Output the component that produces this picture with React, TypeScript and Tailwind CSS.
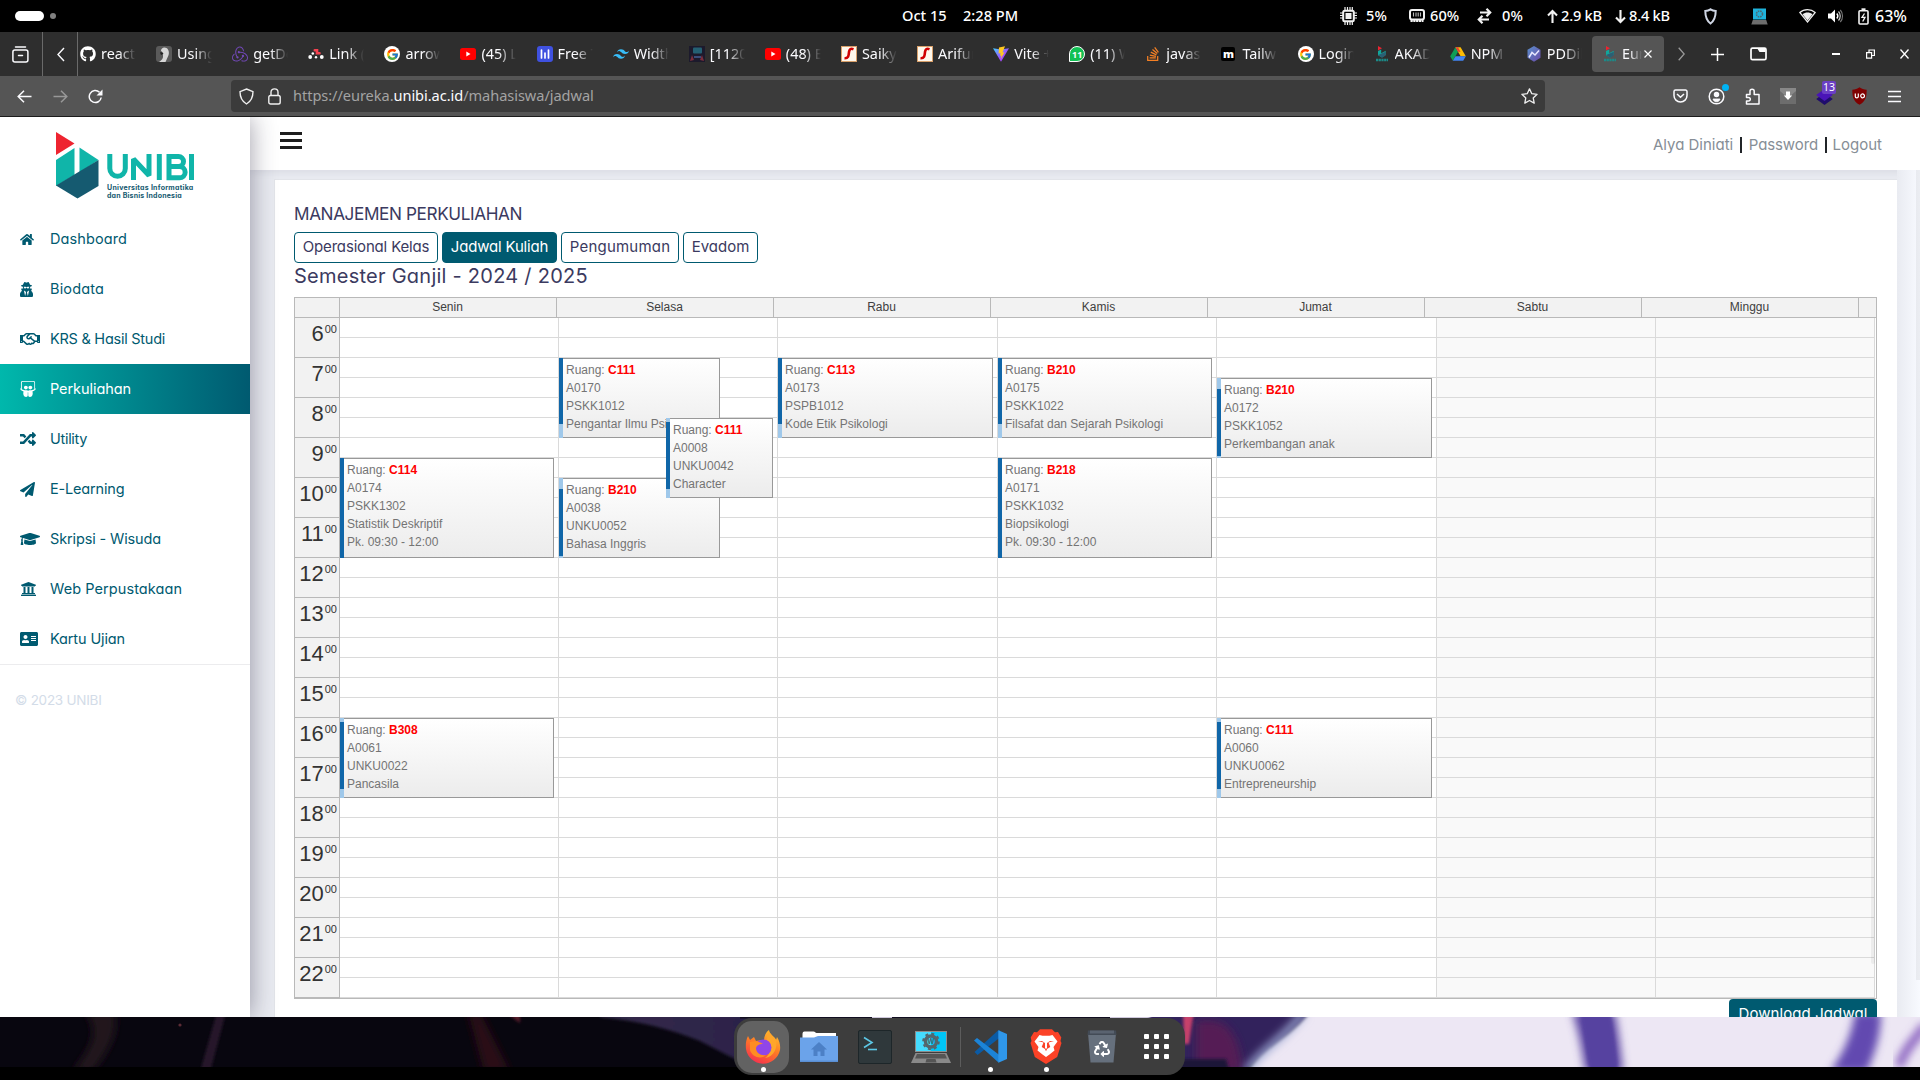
import type { ReactNode } from "react";
import { FaGithub, FaHome, FaUserSecret, FaRegHandshake, FaSlideshare, FaRandom, FaPaperPlane, FaGraduationCap, FaUniversity, FaAddressCard, FaStackOverflow, FaRecycle } from "react-icons/fa";
import { FcGoogle } from "react-icons/fc";
import { SiRedux, SiTailwindcss } from "react-icons/si";

/* ---------- Desktop top bar ---------- */

function TopBar() {
  return (
    <div className="relative flex h-8 items-center bg-black font-['Noto_Sans'] text-[14.6px] font-medium text-white">
      <div className="ml-[15px] h-[10px] w-[29px] rounded-full bg-white" />
      <div className="ml-[6px] size-[6px] rounded-full bg-[#808080]" />
      <div className="ml-[846px] flex whitespace-nowrap">
        <span className="w-[61px]">Oct 15</span>
        <span>2:28 PM</span>
      </div>
      <div className="ml-auto mr-[13px] flex items-center whitespace-nowrap">
        <svg width="17" height="18" viewBox="0 0 17 18" fill="none" stroke="#f2f2f2" className="mr-[9px]">
          <rect x="3.2" y="3.7" width="10.6" height="10.6" rx="1.5" strokeWidth="2" />
          <rect x="6" y="6.5" width="5" height="5" fill="#f2f2f2" />
          <path d="M5 0v3M7.5 0v3M10 0v3M12.3 0v3M5 15v3M7.5 15v3M10 15v3M12.3 15v3M0 6h3M0 8.5h3M0 11h3M14 6h3M14 8.5h3M14 11h3" strokeWidth="1.2" />
        </svg>
        <span className="w-[43px]">5%</span>
        <svg width="16" height="14" viewBox="0 0 16 14" className="mr-[5px]">
          <rect x="1" y="1" width="14" height="9.5" rx="2" fill="none" stroke="#f2f2f2" strokeWidth="2" />
          <path d="M4.500 3.500v4M7 3.500v4M9.200 3.500v4M11.500 3.500v4" stroke="#bbb" strokeWidth="1.1" />
          <path d="M1.500 12h13" stroke="#f2f2f2" strokeWidth="2.2" strokeDasharray="2.2 .6" />
        </svg>
        <span className="w-[47px]">60%</span>
        <svg width="15" height="16" viewBox="0 0 15 16" fill="none" stroke="#f2f2f2" strokeWidth="2.200" className="mr-[10px]">
          <path d="M3 4.500h9.500M9.500 .8l3.700 3.700-3.700 3.700M12 11.500H2.500M5.500 7.800L1.800 11.500l3.700 3.700" />
        </svg>
        <span className="w-[45px]">0%</span>
        <svg width="11" height="15" viewBox="0 0 11 15" fill="none" stroke="#f2f2f2" strokeWidth="2.1" className="mr-[3px]">
          <path d="M5.500 14V2M1 6.500L5.500 2 10 6.500" />
        </svg>
        <span className="w-[54px] tracking-[-0.25px]">2.9 kB</span>
        <svg width="11" height="15" viewBox="0 0 11 15" fill="none" stroke="#f2f2f2" strokeWidth="2.1" className="mr-[3px]">
          <path d="M5.500 1v12M1 8.500L5.500 13 10 8.500" />
        </svg>
        <span className="w-[75px] tracking-[-0.25px]">8.4 kB</span>
        <svg width="13" height="17" viewBox="0 0 13 17" fill="none" stroke="#cfd6e4" strokeWidth="2" className="mr-[34px]">
          <path d="M6.500 1.300c1.600 1 3.200 1.500 5.200 1.700 0 5.400-.700 9.200-5.200 12.500C2 12.200 1.300 8.400 1.300 3c2-.200 3.600-.700 5.200-1.700z" />
        </svg>
        <svg width="17" height="17" viewBox="0 0 17 17" className="mr-[31px]">
          <rect x="2" y="0.500" width="13" height="11" fill="#1fb3dc" />
          <circle cx="8.500" cy="6" r="3" fill="none" stroke="#4b6a76" strokeWidth="1.600" strokeDasharray="1.600 .8" />
          <path d="M1.800 12h13.400l1.500 4.500H.3z" fill="#6d6d6d" />
        </svg>
        <svg width="17" height="14" viewBox="0 0 17 14" className="mr-[12px]">
          <path d="M.8 3.500C5-.3 12-.3 16.200 3.500L8.500 13z" fill="none" stroke="#eee" strokeWidth="1.200" />
          <path d="M3.500 5.200c3-2.200 7-2.200 10 0l-5 6.300z" fill="#eee" />
        </svg>
        <svg width="16" height="14" viewBox="0 0 16 14" fill="none" className="mr-[14px]">
          <path d="M0 4.500h3L7 .5v13l-4-4H0z" fill="#fff" />
          <path d="M8.800 4.500c1.200 1.400 1.200 3.600 0 5" stroke="#fff" strokeWidth="1.400" />
          <path d="M10.500 2.500c2.300 2.400 2.300 6.600 0 9" stroke="#ccc" strokeWidth="1.200" />
          <path d="M12.300 1c3 3.200 3 8.800 0 12" stroke="#777" strokeWidth="1.100" />
        </svg>
        <svg width="11" height="17" viewBox="0 0 11 17" fill="none" stroke="#f2f2f2" className="mr-[6px]">
          <rect x="1" y="2.800" width="9" height="13.200" rx="1" strokeWidth="1.600" />
          <path d="M3.500 1.200h4" strokeWidth="1.800" />
          <path d="M6.500 5.500L4 9.300h3L4.700 13.500" strokeWidth="1.300" />
        </svg>
        <span className="text-[16px]">63%</span>
      </div>
    </div>
  );
}

/* ---------- Browser chrome ---------- */

const YouTubeIcon = () => (
  <svg width="16" height="12" viewBox="0 0 16 12">
    <rect width="16" height="12" rx="2.500" fill="#f00" />
    <path d="M6.300 3.600v4.800L10.500 6z" fill="#fff" />
  </svg>
);

const ScriptSIcon = () => (
  <svg width="16" height="16" viewBox="0 0 16 16">
    <rect x=".5" y=".5" width="15" height="15" fill="#fff8ec" stroke="#d9a06a" />
    <path d="M12.500 3.200C9.500 2 8.300 3.500 8 6c-.3 3.500-.5 6.500-4.500 6.300" fill="none" stroke="#d00000" strokeWidth="2.600" />
  </svg>
);

const UnibiIcon = () => (
  <svg width="16" height="16" viewBox="0 0 16 16">
    <path d="M4 0l4 2.200-4 2.200z" fill="#ed2330" />
    <path d="M4 5l3.200-1.500v3.700l4.500-2.500v4L8 11.500 4 9.300z" fill="#11a79c" />
    <path d="M4.200 9l7.500-3.200v3.700L8 11.700z" fill="#2b5f74" />
    <path d="M2 14h12" stroke="#1c8a88" strokeWidth="2.400" strokeDasharray="2.200 .5" />
  </svg>
);

function GoogleIcon() {
  return (
    <span className="flex size-4 items-center justify-center rounded-full bg-white">
      <FcGoogle className="size-[13px]" />
    </span>
  );
}

const tabs: { label: string; icon: ReactNode }[] = [
  { label: "react-icons", icon: <FaGithub className="size-4 text-white" /> },
  {
    label: "Using the",
    icon: (
      <svg width="16" height="16" viewBox="0 0 16 16">
        <rect width="16" height="16" rx="3" fill="#5a5a5a" />
        <path d="M5 5c0-3 3-4.500 5.500-3 3 2 3 6.500 1 9.500L9.500 16H3c3-2 4.500-4 4-6.500C6.500 7.500 7 6 5 5z" fill="#d6d6d6" />
        <path d="M4 6.500c2-.8 3.300 0 3.300 1.500L5 9z" fill="#222" />
      </svg>
    ),
  },
  { label: "getDefault", icon: <SiRedux className="size-4 text-[#7248b8]" /> },
  {
    label: "Link (ov",
    icon: (
      <svg width="16" height="12" viewBox="0 0 16 12">
        <g fill="#fff"><circle cx="2.200" cy="9" r="1.900" /><circle cx="8" cy="9.200" r="1.200" /><circle cx="13.800" cy="9" r="1.900" /><circle cx="4.800" cy="5.500" r="1.300" /></g>
        <path d="M6.800 2.300h2.200v3h2.500" fill="none" stroke="#f44250" strokeWidth="2.600" strokeLinecap="round" />
      </svg>
    ),
  },
  { label: "arrow ic", icon: <GoogleIcon /> },
  { label: "(45) Lo", icon: <YouTubeIcon /> },
  {
    label: "Free Ta",
    icon: (
      <svg width="16" height="16" viewBox="0 0 16 16">
        <rect width="16" height="16" rx="3" fill="#3f51e0" />
        <path d="M4.500 4v8M8 7v5M11.500 4v8" stroke="#fff" strokeWidth="1.700" strokeLinecap="round" />
      </svg>
    ),
  },
  { label: "Width -", icon: <SiTailwindcss className="size-4 text-[#38bdf8]" /> },
  {
    label: "[1120]",
    icon: (
      <svg width="16" height="16" viewBox="0 0 16 16">
        <rect width="16" height="16" fill="#1c1a2c" />
        <path d="M1 15l2-6 2 5zM15 15l-2-6-2 5z" fill="#7b2d3c" />
        <rect x="4" y="1.500" width="9" height="6" rx="1" fill="#246073" />
        <path d="M5 10h7v2H5z" fill="#3a4d7a" />
      </svg>
    ),
  },
  { label: "(48) El", icon: <YouTubeIcon /> },
  { label: "Saikyo", icon: <ScriptSIcon /> },
  { label: "Arifure", icon: <ScriptSIcon /> },
  {
    label: "Vite + R",
    icon: (
      <svg width="16" height="16" viewBox="0 0 16 16">
        <defs>
          <linearGradient id="vite" x1="0" y1="0" x2="1" y2="1"><stop offset="0" stopColor="#41d1ff" /><stop offset=".6" stopColor="#a34bfe" /></linearGradient>
        </defs>
        <path d="M0 2.200L8 3.500l8-1.300L8 15.800z" fill="url(#vite)" />
        <path d="M12 .2L6 1.400l-.4 6.100 2-.4-.6 2.700 1.500-.4-.8 3.800 3.800-7-2 .4z" fill="#ffc820" />
      </svg>
    ),
  },
  {
    label: "(11) Wh",
    icon: (
      <span className="relative flex size-4 items-center justify-center rounded-full rounded-bl-[3px] border border-white bg-[#12c154] text-[9px] font-bold leading-none text-white">11</span>
    ),
  },
  { label: "javascr", icon: <FaStackOverflow className="size-4 text-[#f48024]" /> },
  {
    label: "Tailwin",
    icon: (
      <span className="flex size-[14px] items-center justify-center rounded-[2px] bg-black pb-[2px] text-[11px] font-black leading-none text-white">m</span>
    ),
  },
  { label: "Login –", icon: <GoogleIcon /> },
  { label: "AKADE", icon: <UnibiIcon /> },
  {
    label: "NPM G",
    icon: (
      <svg width="16" height="14" viewBox="0 0 16 14">
        <path d="M5.400.3h5.200l5.200 9h-5.200z" fill="#fbbc04" />
        <path d="M5.400.3L8 4.800 2.800 13.800.2 9.300z" fill="#0f9d58" />
        <path d="M5.500 9.300h10.300l-2.600 4.500H2.800z" fill="#4285f4" />
        <path d="M5.400.3h2.600L10.600 5 8 4.800z" fill="#ea4335" />
      </svg>
    ),
  },
  {
    label: "PDDikti",
    icon: (
      <svg width="16" height="16" viewBox="0 0 16 16">
        <defs>
          <linearGradient id="pd" x1="0" y1="0" x2="1" y2="1"><stop offset="0" stopColor="#5a8fcc" /><stop offset="1" stopColor="#6a4aa8" /></linearGradient>
        </defs>
        <path d="M8 0l6.500 3.800v8L8 15.800l-6.500-4v-8z" fill="url(#pd)" />
        <path d="M3 11.500L6 6.500l3 2.500 4-4.500" fill="none" stroke="#e8e8ff" strokeWidth="1.500" />
      </svg>
    ),
  },
];

function Tab({ icon, label }: { icon: ReactNode; label: string }) {
  return (
    <div className="flex w-[76.100px] shrink-0 items-center">
      <span className="flex w-[21px] shrink-0 items-center">{icon}</span>
      <span className="w-[35px] overflow-hidden whitespace-nowrap [mask-image:linear-gradient(to_right,black_50%,transparent)]">{label}</span>
    </div>
  );
}

function TabBar() {
  return (
    <div className="flex h-11 items-stretch bg-[#2e2e2e] font-['Noto_Sans'] text-[14.400px] text-[#fbfbfe]">
      <div className="flex w-[43px] items-center border-r border-[#6a6a6a] pl-[12px]">
        <svg width="17" height="17" viewBox="0 0 17 17" fill="none" stroke="#fbfbfe" strokeWidth="1.500" strokeLinecap="round">
          <path d="M3.500 .9h10" />
          <rect x=".9" y="4" width="15" height="12" rx="2" />
          <path d="M6.500 9.500h4" />
        </svg>
      </div>
      <div className="flex w-[35px] items-center border-r border-[#6a6a6a] pl-[14px]">
        <svg width="8" height="15" viewBox="0 0 8 15" fill="none" stroke="#fbfbfe" strokeWidth="1.400"><path d="M7 1L1 7.500 7 14" /></svg>
      </div>
      <div className="ml-[2px] flex">
        {tabs.map((t, i) => (
          <Tab key={i} icon={t.icon} label={t.label} />
        ))}
      </div>
      <div className="-ml-[10px] my-1 flex w-[72px] shrink-0 items-center rounded bg-[#555] pl-[10px]">
        <span className="w-5 shrink-0"><UnibiIcon /></span>
        <span className="w-[20px] overflow-hidden whitespace-nowrap [mask-image:linear-gradient(to_right,black_40%,transparent)]">Eureka</span>
        <svg width="8" height="8" viewBox="0 0 8 8" stroke="#fff" strokeWidth="1.200" className="ml-[2px]"><path d="M.5.500l7 7M7.500.500l-7 7" /></svg>
      </div>
      <div className="flex flex-1 items-center">
        <svg width="7" height="14" viewBox="0 0 7 14" fill="none" stroke="#999" strokeWidth="1.300" className="ml-[14px]"><path d="M.7.700L6.200 7 .7 13.300" /></svg>
        <svg width="13" height="13" viewBox="0 0 13 13" stroke="#fff" strokeWidth="1.500" className="ml-[26px]"><path d="M6.500 0v13M0 6.500h13" /></svg>
        <svg width="17" height="14" viewBox="0 0 17 14" className="ml-[26px]">
          <rect x="1" y="1.200" width="15" height="11.500" rx="1.500" fill="none" stroke="#fff" strokeWidth="1.700" />
          <path d="M7 1h8.500v4H9.500z" fill="#fff" />
        </svg>
        <div className="ml-[65px] h-[1.500px] w-2 bg-white" />
        <svg width="9" height="10" viewBox="0 0 9 10" fill="none" stroke="#fff" strokeWidth="1.200" className="ml-[26px]"><path d="M.6 3.600h5v5.500h-5zM3 3.500V1h5.400v5.500H6" /></svg>
        <svg width="9" height="10" viewBox="0 0 9 10" stroke="#fff" strokeWidth="1.300" className="ml-[25px]"><path d="M.5.500l8 9M8.500.500l-8 9" /></svg>
      </div>
    </div>
  );
}

function NavBar() {
  return (
    <div className="flex h-[41px] items-center border-b border-[#1c1c1c] bg-[#555] font-['Noto_Sans'] text-[14.600px]">
      <svg width="15" height="13" viewBox="0 0 15 13" fill="none" stroke="#fbfbfe" strokeWidth="1.500" className="ml-[17px]"><path d="M7 .7L1.200 6.500 7 12.300M1 6.500h13.500" /></svg>
      <svg width="15" height="13" viewBox="0 0 15 13" fill="none" stroke="#989898" strokeWidth="1.500" className="ml-[21px]"><path d="M8 .7l5.800 5.800L8 12.300M14 6.500H.5" /></svg>
      <svg width="15" height="15" viewBox="0 0 15 15" fill="none" stroke="#fbfbfe" strokeWidth="1.500" className="ml-[20px]">
        <path d="M13.200 8.500A6 6 0 1 1 11.500 3.300" />
        <path d="M14.500 .5v6H8.500z" fill="#fbfbfe" stroke="none" />
      </svg>
      <div className="ml-[128px] flex h-8 w-[1314px] items-center rounded bg-[#3b3b3b]">
        <svg width="15" height="17" viewBox="0 0 15 17" fill="none" stroke="#f0f0f0" strokeWidth="1.400" className="ml-[8px]">
          <path d="M7.500 1l6.500 2.600C14 9.500 12 13.500 7.500 16 3 13.500 1 9.500 1 3.600z" />
        </svg>
        <svg width="13" height="17" viewBox="0 0 13 17" fill="none" stroke="#f0f0f0" strokeWidth="1.400" className="ml-[14px]">
          <rect x=".8" y="7.500" width="11.400" height="8.500" rx="1.800" />
          <path d="M3 7V4.300C3 2.300 4.500.900 6.500.900S10 2.300 10 4.300V7" />
        </svg>
        <span className="ml-[12px] whitespace-nowrap tracking-[-0.060px] text-[#a3a3a3]">https://eureka.<span className="text-[#fbfbfe]">unibi.ac.id</span>/mahasiswa/jadwal</span>
        <svg width="17" height="16" viewBox="0 0 17 16" fill="none" stroke="#f0f0f0" strokeWidth="1.300" strokeLinejoin="round" className="ml-auto mr-[7px]">
          <path d="M8.500.900l2.300 4.800 5.300.600-3.900 3.600 1 5.200-4.700-2.600-4.700 2.600 1-5.200L.9 6.300l5.300-.600z" />
        </svg>
      </div>
      <svg width="15" height="14" viewBox="0 0 15 14" fill="none" stroke="#fbfbfe" strokeWidth="1.500" className="ml-[128px]">
        <path d="M2.500 1h10A1.500 1.500 0 0 1 14 2.500V6.500a6.500 6.500 0 0 1-13 0V2.500A1.500 1.500 0 0 1 2.500 1z" /><path d="M4 5l3.500 3.300L11 5" />
      </svg>
      <span className="relative ml-[20px]">
        <svg width="17" height="17" viewBox="0 0 17 17" fill="none" stroke="#fbfbfe" strokeWidth="1.500">
          <circle cx="8.500" cy="8.500" r="7.300" /><circle cx="8.500" cy="6.500" r="2" fill="#fbfbfe" /><path d="M5 11h7c-.5 2-2 2.800-3.500 2.800S5.500 13 5 11z" fill="#fbfbfe" strokeWidth=".8" />
        </svg>
        <span className="absolute -right-[4px] -top-[4px] size-[7px] rounded-full bg-[#00b3f4]" />
      </span>
      <svg width="15" height="17" viewBox="0 0 15 17" fill="none" stroke="#fbfbfe" strokeWidth="1.500" strokeLinejoin="round" className="ml-[20px]">
        <path d="M1.500 6.500H5V3.300a2 2 0 0 1 4.200 0v3.200H14V16H1.500v-3h2a1.800 1.800 0 0 0 0-3.600h-2z" />
      </svg>
      <svg width="16" height="16" viewBox="0 0 16 16" className="ml-[20px]">
        <rect width="16" height="16" fill="#888" /><path d="M0 3l8 7 8-7v13H0z" fill="#6d6d6d" />
        <path d="M6 3.500h4v4h2.200L8 12 3.800 7.500H6z" fill="#fff" />
      </svg>
      <span className="relative ml-[20px]">
        <svg width="17" height="17" viewBox="0 0 17 17"><path d="M8.500 5l8.300 6-8.300 6-8.300-6z" fill="#1f0d6b" /><path d="M8.500 1l8.300 6-8.300 6-8.300-6z" fill="#4a14b8" /></svg>
        <span className="absolute -right-[3px] -top-[7px] flex h-[13px] w-[14px] items-center justify-center rounded-[2px] bg-[#6b3fc4] text-[10.500px] leading-none text-white">13</span>
      </span>
      <svg width="15" height="18" viewBox="0 0 15 18" className="ml-[19px]">
        <path d="M7.500.300c2 1.700 4.500 2.200 7.200 2.400 0 7-1 11.500-7.200 15C1.300 14.200.3 9.700.3 2.700 3 2.500 5.500 2 7.500.300z" fill="#800000" />
        <path d="M3.300 6.500v3c0 1.700 3 1.700 3 0v-3M8.700 9.200a1.900 1.900 0 1 0 .1-1z" fill="none" stroke="#fff" strokeWidth="1.200" />
      </svg>
      <svg width="13" height="13" viewBox="0 0 13 13" stroke="#fbfbfe" strokeWidth="1.500" className="ml-[21px]"><path d="M0 1.500h13M0 6.500h13M0 11.500h13" /></svg>
    </div>
  );
}

/* ---------- Page sidebar ---------- */

const menu = [
  { label: "Dashboard", track: "tracking-[0.09px]", icon: <FaHome className="h-[15px] w-[14px]" /> },
  { label: "Biodata", track: "tracking-[0.15px]", icon: <FaUserSecret className="h-[15px] w-[13px]" /> },
  { label: "KRS & Hasil Studi", track: "tracking-[-0.25px]", icon: <FaRegHandshake className="h-[16px] w-[20px]" /> },
  { label: "Perkuliahan", track: "tracking-[-0.07px]", icon: <FaSlideshare className="size-[16px]" />, active: true },
  { label: "Utility", track: "tracking-[-0.3px]", icon: <FaRandom className="size-[16px]" /> },
  { label: "E-Learning", track: "tracking-[-0.17px]", icon: <FaPaperPlane className="size-[15px]" /> },
  { label: "Skripsi - Wisuda", track: "tracking-[-0.13px]", icon: <FaGraduationCap className="h-[16px] w-[20px]" /> },
  { label: "Web Perpustakaan", track: "tracking-[0.08px]", icon: <FaUniversity className="h-[16px] w-[17px]" /> },
  { label: "Kartu Ujian", track: "tracking-[-0.12px]", icon: <FaAddressCard className="h-[16px] w-[18px]" /> },
];

function Logo() {
  return (
    <div className="ml-[56px] flex h-[68px] w-[140px]">
      <svg width="43" height="67" viewBox="0 0 43 67" className="shrink-0">
        <path d="M0 0l18.500 11.500L0 23z" fill="#ee2430" />
        <path d="M0 28l18.500-12v27L0 54z" fill="#10b5a9" />
        <path d="M23.500 15.500L42.500 28 23.500 40.500z" fill="#10b5a9" />
        <path d="M42.500 28v26L21.500 66.500 0 53.500z" fill="#155a70" />
      </svg>
      <div className="ml-[8px] flex flex-col">
        <svg width="88" height="27" viewBox="0 0 88 27" fill="none" stroke="#10b5a9" strokeWidth="5" className="mt-[22px] block shrink-0">
          <path d="M2.800 0v14.500a7.700 7.700 0 0 0 15.500 0V0" />
          <path d="M26.500 26V5l15.500 16.500V0" strokeLinejoin="bevel" />
          <path d="M52.300 0v26" />
          <path d="M61 12.500h10.500a5 5 0 0 0 0-10H62v21.300h10.500a5.500 5.500 0 0 0 0-11.300" />
          <path d="M84.500 0v26" />
        </svg>
        <span className="mt-[3px] block whitespace-nowrap text-[7px] font-bold leading-[8px] tracking-[0.26px] text-[#155a70]">Universitas Informatika</span>
        <span className="block whitespace-nowrap text-[7px] font-bold leading-[8px] tracking-[0.2px] text-[#155a70]">dan Bisnis Indonesia</span>
      </div>
    </div>
  );
}

function Sidebar() {
  return (
    <aside className="relative z-10 w-[250px] shrink-0 bg-white pt-[15px] shadow-[0_0_24px_rgba(40,35,60,0.45)]">
      <Logo />
      <nav className="mt-[14px] border-b border-[#ececee]">
        {menu.map((m) => (
          <div
            key={m.label}
            className={
              m.active
                ? "flex h-[50px] items-center bg-gradient-to-r from-[#00b8ac] to-[#005a70] pl-5 text-[14.500px] text-white"
                : "flex h-[50px] items-center pl-5 text-[14.500px] text-[#005a70]"
            }
          >
            <span className="flex w-[30px] items-center">{m.icon}</span>
            <span className={"whitespace-nowrap " + m.track}>{m.label}</span>
          </div>
        ))}
      </nav>
      <p className="mt-[24px] pl-[15px] text-[13.500px] leading-[22px] tracking-[-0.25px] text-[#d3dce8]">© 2023 UNIBI</p>
    </aside>
  );
}

/* ---------- Schedule ---------- */

const days = [
  { name: "Senin", column: "w-[219px]" },
  { name: "Selasa", column: "w-[219px]" },
  { name: "Rabu", column: "w-[220px]" },
  { name: "Kamis", column: "w-[219px]" },
  { name: "Jumat", column: "w-[220px]" },
  { name: "Sabtu", column: "w-[219px]", weekend: true },
  { name: "Minggu", column: "w-[219px]", weekend: true },
];
const hours = [6, 7, 8, 9, 10, 11, 12, 13, 14, 15, 16, 17, 18, 19, 20, 21, 22];

type Lesson = {
  left: number;
  top: number;
  width: number;
  height: number;
  barTop: number;
  barHeight: number;
  room: string;
  lines: string[];
};

const lessons: Lesson[] = [
  { left: 0, top: 140, width: 214, height: 100, barTop: 0, barHeight: 100, room: "C114", lines: ["A0174", "PSKK1302", "Statistik Deskriptif", "Pk. 09:30 - 12:00"] },
  { left: 0, top: 400, width: 214, height: 80, barTop: 4, barHeight: 67, room: "B308", lines: ["A0061", "UNKU0022", "Pancasila"] },
  { left: 219, top: 40, width: 161, height: 80, barTop: 0, barHeight: 66, room: "C111", lines: ["A0170", "PSKK1012", "Pengantar Ilmu Psikologi"] },
  { left: 219, top: 160, width: 161, height: 80, barTop: 11, barHeight: 67, room: "B210", lines: ["A0038", "UNKU0052", "Bahasa Inggris"] },
  { left: 326, top: 100, width: 107, height: 80, barTop: 4, barHeight: 67, room: "C111", lines: ["A0008", "UNKU0042", "Character"] },
  { left: 438, top: 40, width: 215, height: 80, barTop: 0, barHeight: 66, room: "C113", lines: ["A0173", "PSPB1012", "Kode Etik Psikologi"] },
  { left: 658, top: 40, width: 214, height: 80, barTop: 0, barHeight: 66, room: "B210", lines: ["A0175", "PSKK1022", "Filsafat dan Sejarah Psikologi"] },
  { left: 658, top: 140, width: 214, height: 100, barTop: 0, barHeight: 100, room: "B218", lines: ["A0171", "PSKK1032", "Biopsikologi", "Pk. 09:30 - 12:00"] },
  { left: 877, top: 60, width: 215, height: 80, barTop: 11, barHeight: 67, room: "B210", lines: ["A0172", "PSKK1052", "Perkembangan anak"] },
  { left: 877, top: 400, width: 215, height: 80, barTop: 4, barHeight: 67, room: "C111", lines: ["A0060", "UNKU0062", "Entrepreneurship"] },
];

function LessonCard({ lesson }: { lesson: Lesson }) {
  return (
    <div
      className="absolute flex overflow-hidden bg-[#9fc8ea] text-[12px] leading-[18px] text-[#747474]"
      style={{ left: lesson.left, top: lesson.top, width: lesson.width, height: lesson.height }}
    >
      <div className="w-1 shrink-0">
        <div className="w-1 bg-[#1066a8]" style={{ marginTop: lesson.barTop, height: lesson.barHeight }} />
      </div>
      <div className="flex-1 whitespace-nowrap border-y border-r border-[#999] bg-gradient-to-b from-white to-[#ececec] pl-[3px] pt-[2px]">
        <div>Ruang: <b className="text-[#f00]">{lesson.room}</b></div>
        {lesson.lines.map((l) => (
          <div key={l}>{l}</div>
        ))}
      </div>
    </div>
  );
}

function Schedule() {
  return (
    <div className="relative w-[1583px] border border-[#b9b9b9] bg-white font-['Liberation_Sans']">
      <div className="flex h-5 border-b border-[#b9b9b9] bg-[#f2f2f2] text-[12px] leading-[18px] text-[#404040]">
        <div className="w-[45px] border-r border-[#b9b9b9]" />
        {days.map((d) => (
          <div key={d.name} className="w-[217px] border-r border-[#b9b9b9] pr-px text-center">{d.name}</div>
        ))}
      </div>
      <div className="flex h-[680px]">
        <div className="w-[45px] border-r border-[#b9b9b9] bg-[#f2f2f2]">
          {hours.map((h) => (
            <div key={h} className="flex h-10 items-start justify-end border-b border-[#b9b9b9] pr-[2px] text-[#333]">
              <span className="mt-[3px] text-[22px] leading-[26px]">{h}</span>
              <span className="ml-[1px] mt-[4px] text-[11px] leading-[14px]">00</span>
            </div>
          ))}
        </div>
        <div className="relative flex w-[1535px]">
          {days.map((d) => (
            <div
              key={d.name}
              className={[
                "border-r border-[#dadada] bg-[repeating-linear-gradient(to_bottom,transparent_0_19px,#dadada_19px_20px)]",
                d.weekend ? "bg-[#f9f9f9]" : "bg-white",
                d.column,
              ].join(" ")}
            />
          ))}
          {lessons.map((l) => (
            <LessonCard key={l.left + "-" + l.top} lesson={l} />
          ))}
          <div className="absolute right-0 top-[179px] h-[467px] w-1 rounded bg-black/5" />
        </div>
      </div>
    </div>
  );
}

const sections = [
  { label: "Operasional Kelas", cls: "w-[144px] tracking-[-0.17px]" },
  { label: "Jadwal Kuliah", cls: "w-[115px] tracking-[-0.18px]", active: true },
  { label: "Pengumuman", cls: "w-[118px] tracking-[0.21px]" },
  { label: "Evadom", cls: "w-[75px]" },
];

function Page() {
  return (
    <div className="flex h-[900px] overflow-hidden bg-[#e9ebf1] font-[Inter] [font-feature-settings:'cv11']">
      <Sidebar />
      <main className="flex w-[1670px] shrink-0 flex-col">
        <header className="flex h-[53px] shrink-0 items-start justify-between bg-white pl-[30px] pr-[38px] shadow-[0_2px_8px_rgba(40,40,60,0.08)]">
          <svg width="22" height="17" viewBox="0 0 22 17" stroke="#1e1e1e" strokeWidth="3" className="mt-[15px]"><path d="M0 1.500h22M0 8.500h22M0 15.500h22" /></svg>
          <div className="mt-[16px] flex items-center text-[15px] leading-6 text-[#868e96]">
            <span>Alya Diniati</span>
            <span className="mx-[7px] h-4 w-[1.500px] bg-[#212529]" />
            <span className="tracking-[-0.1px]">Password</span>
            <span className="ml-[7px] mr-[6px] h-4 w-[1.500px] bg-[#212529]" />
            <span>Logout</span>
          </div>
        </header>
        <div className="flex h-[847px]">
          <section className="ml-[24px] mt-[9px] w-[1623px] border-l border-t border-[#e2e4e9] bg-white pl-[19px] text-[#3b3a60]">
            <h1 className="mt-[22px] text-[17.200px] leading-6 tracking-[-0.4px]">MANAJEMEN PERKULIAHAN</h1>
            <div className="mt-[6px] flex gap-1 text-[15px]">
              {sections.map((s) => (
                <div
                  key={s.label}
                  className={[
                    "flex h-[31px] items-center justify-center whitespace-nowrap rounded border border-[#005a70]",
                    s.active ? "bg-[#005a70] text-white" : "bg-white",
                    s.cls,
                  ].join(" ")}
                >
                  {s.label}
                </div>
              ))}
            </div>
            <h2 className="mb-[8px] text-[20px] leading-[26px] tracking-[0.25px]">Semester Ganjil - 2024 / 2025</h2>
            <Schedule />
            <div className="ml-auto mr-[20px] flex h-[31px] w-[148px] items-center justify-center rounded bg-[#005a70] text-[15px] text-white">
              <span className="whitespace-nowrap tracking-[0.09px]">Download Jadwal</span>
            </div>
          </section>
          <div className="flex flex-1 justify-end bg-gradient-to-r from-[#e9ebf1] to-[#f8faff]">
            <div className="h-[810px] w-1 bg-black/5" />
          </div>
        </div>
      </main>
    </div>
  );
}

/* ---------- Desktop dock ---------- */

function Wallpaper() {
  return (
    <svg width="1920" height="50" viewBox="0 0 1920 50" className="absolute left-0 top-0">
      <defs>
        <filter id="soft" x="-20%" y="-50%" width="140%" height="200%"><feGaussianBlur stdDeviation="4" /></filter>
        <filter id="mild" x="-20%" y="-50%" width="140%" height="200%"><feGaussianBlur stdDeviation="1.500" /></filter>
        <linearGradient id="wave" x1="0" x2="1"><stop offset="0" stopColor="#332a48" /><stop offset="1" stopColor="#2a2148" /></linearGradient>
      </defs>
      <rect width="1920" height="50" fill="#08060f" />
      <path d="M85-5h30c5 25-12 45-22 60H72C92 30 100 15 85-5z" fill="#22161f" filter="url(#soft)" />
      <path d="M217-5h9l-16 60h-10z" fill="#28162a" filter="url(#mild)" />
      <path d="M468-5h12l30 60h-26z" fill="#2a0d18" filter="url(#soft)" />
      <path d="M508-3h12v9z" fill="#5a1f2c" filter="url(#mild)" />
      <circle cx="180" cy="8" r="1.600" fill="#5c2c36" />
      <path d="M600 0C640 4 670 12 700 24c20 10 34 18 60 30h20V-10H600z" fill="url(#wave)" filter="url(#mild)" />
      <path d="M740 0h440v1.500H740z" fill="#120e20" />
      <path d="M872 0h20v1.500h-20zM1110 0h52v1.500h-52z" fill="#cfc8dc" />
      <path d="M1150-5h165l-72 60h-93z" fill="#32245c" filter="url(#mild)" />
      <path d="M1183-5h11l-5 32h-5z" fill="#c8426c" filter="url(#mild)" />
      <path d="M1196 5c30-8 44 12 46 50h-46z" fill="#551f55" filter="url(#soft)" />
      <path d="M1180 42h46l4 14h-50z" fill="#1c1238" filter="url(#mild)" />
      <path d="M1310-5H1930v60H1248c14-24 42-34 62-60z" fill="#ede7f4" filter="url(#mild)" />
      <path d="M1304-5c-18 26-42 36-58 60" fill="none" stroke="#9ba6d2" strokeWidth="7" filter="url(#soft)" />
      <path d="M1572-5h43c4 20 6 40 8 60h-38c-3-20-6-40-13-60z" fill="#5f4aa4" filter="url(#soft)" />
      <path d="M1580-5h30c4 20 6 40 8 60h-28z" fill="#5743a0" filter="url(#mild)" />
      <path d="M1855-5h26c0 25-6 40-14 60h-37c14-20 21-36 25-60z" fill="#6249b0" filter="url(#soft)" />
      <path d="M1925 8c-8 14-20 22-26 42" fill="none" stroke="#8a62c0" strokeWidth="9" filter="url(#soft)" />
    </svg>
  );
}

function DockItem({ children, width, running }: { children: ReactNode; width: string; running?: boolean }) {
  return (
    <div className={"relative flex h-full items-center justify-center " + width}>
      {children}
      {running && <span className="absolute bottom-[3px] left-1/2 -ml-[2px] size-[5px] rounded-full bg-white" />}
    </div>
  );
}

function Dock() {
  return (
    <div className="relative ml-[734px] flex h-[57px] w-[451px] items-center rounded-[18px] bg-[#3d3d3d] pl-[3px]">
      <div className="flex h-[52px] w-[52px] items-center justify-center rounded-[15px] bg-[#626262]">
        <svg width="36" height="36" viewBox="0 0 36 36">
          <defs>
            <linearGradient id="fx" x1=".8" y1="0" x2=".3" y2="1"><stop offset="0" stopColor="#ffc22e" /><stop offset=".5" stopColor="#ff7a25" /><stop offset="1" stopColor="#f5314f" /></linearGradient>
          </defs>
          <path d="M3 7l2 4 4-3 2 4c3-1 6-1 8-.5C19 7 21 3 24 1c0 4 5 6 7 10l1-3c3 5 3.500 9 3 13A17.300 17.300 0 0 1 1 20C.5 15 1 11 3 7z" fill="url(#fx)" />
          <path d="M24 1c0 4 5 6 7 10 2 7-2 17-11 18 6-4 6-10 1-15z" fill="#ffa62b" />
          <circle cx="18.500" cy="18.500" r="8" fill="#9046e8" />
          <path d="M5 13c4-1.500 9-1 13 2-4 0-6 1-7 4 0 5 5 8 10 7-5 5-14 2-16-5z" fill="#ff8c22" />
        </svg>
        <span className="absolute left-[26.500px] top-[49px] size-[5px] rounded-full bg-white" />
      </div>
      <DockItem width="w-[60px]">
        <svg width="38" height="32" viewBox="0 0 38 32">
          <path d="M2.500 3.500c0-2 .5-3 2-3h9c1.500 0 2 1.500 3 1.500H36V8H2.500z" fill="#fff" />
          <path d="M0 6.500h14l4-1.500h20v25.500H0z" fill="#6ba3ea" /><path d="M0 29.500h38v1.500H0z" fill="#5a8fd4" />
          <path d="M19 11l8 7.500h-2.500V25h-4v-4.500h-3V25h-4v-6.500H11z" fill="#4c80c6" />
        </svg>
      </DockItem>
      <DockItem width="w-[52px]">
        <svg width="34" height="34" viewBox="0 0 34 34">
          <rect x=".5" y=".5" width="33" height="33" rx="1.500" fill="#2f383b" stroke="#1d2629" />
          <path d="M6 7.500l8 5-8 5" fill="none" stroke="#5cc8e6" strokeWidth="1.600" /><path d="M10 19.500h9" stroke="#5cc8e6" strokeWidth="1.600" />
        </svg>
      </DockItem>
      <DockItem width="w-[59px]">
        <svg width="40" height="34" viewBox="0 0 40 34">
          <rect x="4" y="1" width="32" height="21" fill="#8d8d8d" /><rect x="5" y="2" width="15" height="19" fill="#45dcff" /><rect x="20" y="2" width="15" height="19" fill="#00c6f7" />
          <circle cx="20" cy="11.500" r="5.500" fill="none" stroke="#54666d" strokeWidth="3.500" /><circle cx="20" cy="11.500" r="7.800" fill="none" stroke="#54666d" strokeWidth="2" strokeDasharray="3 3.130" />
          <text x="20" y="14" fontSize="7" textAnchor="middle" fill="#45666f" className="font-[Inter] font-bold">W</text>
          <path d="M4.500 23h31L40 33H0z" fill="#8a8a8a" /><path d="M6 24h28l2 4.500H4z" fill="#555" /><path d="M15.500 29h9l1 3.500h-11z" fill="#555" />
        </svg>
      </DockItem>
      <div className="h-10 w-px bg-[#5c5c5c]" />
      <DockItem width="w-[58px]" running>
        <svg width="33" height="33" viewBox="0 0 33 33">
          <path d="M.5 22L3.500 25 26 7.500V.3L24 .5z" fill="#0b5ba5" />
          <path d="M0 10.500L3 8l23 17.500-1.500 7z" fill="#1c84d8" />
          <path d="M24.300.300L33 4v25l-8.700 3.700V.3z" fill="#2f97ea" />
        </svg>
      </DockItem>
      <DockItem width="w-[54px]" running>
        <svg width="32" height="35" viewBox="0 0 32 35">
          <path d="M10 .3h12l3 3 3-.3 3.300 5.500L30.500 12l1 2-4.300 14L16 35 4.800 28 .5 14l1-2L.7 8.500 4 3l3 .3z" fill="#fb4227" />
          <path d="M9.500 6l3 .8h7l3-.8 5 6.500-4 5.500 1 3.500-5 4L16 28l-3.500-2.500-5-4 1-3.500-4-5.500z" fill="#fff" />
          <path d="M8 12l5.500 1.500-1.800 4.500 3.300 2 1 3 1-3 3.300-2-1.800-4.500L24 12l-4 0-3 2v5l-1 1-1-1v-5l-3-2z" fill="#fb4227" />
          <path d="M11.500 23.500L16 21.500l4.500 2L16 26z" fill="#fff" />
        </svg>
      </DockItem>
      <DockItem width="w-[58px]">
        <span className="relative flex">
          <svg width="30" height="33" viewBox="0 0 30 33">
            <path d="M1 3h28l-2.500 29.500h-23z" fill="#66707d" /><path d="M1 .5h28l.5 4.500H.5z" fill="#434b56" /><path d="M3 .5h24v3H3z" fill="#5a6370" />
          </svg>
          <FaRecycle className="absolute left-[7px] top-[11px] size-4 text-white" />
        </span>
      </DockItem>
      <DockItem width="w-[50px]">
        <div className="grid grid-cols-3 gap-[5px]">
          {hours.slice(0, 9).map((h) => (
            <span key={h} className="size-[5px] rounded-[1px] bg-white" />
          ))}
        </div>
      </DockItem>
    </div>
  );
}

export default function App() {
  return (
    <div className="h-[1080px] w-[1920px] overflow-hidden bg-black">
      <TopBar />
      <TabBar />
      <NavBar />
      <Page />
      <div className="relative h-[63px] pt-[1px]">
        <Wallpaper />
        <Dock />
      </div>
    </div>
  );
}
